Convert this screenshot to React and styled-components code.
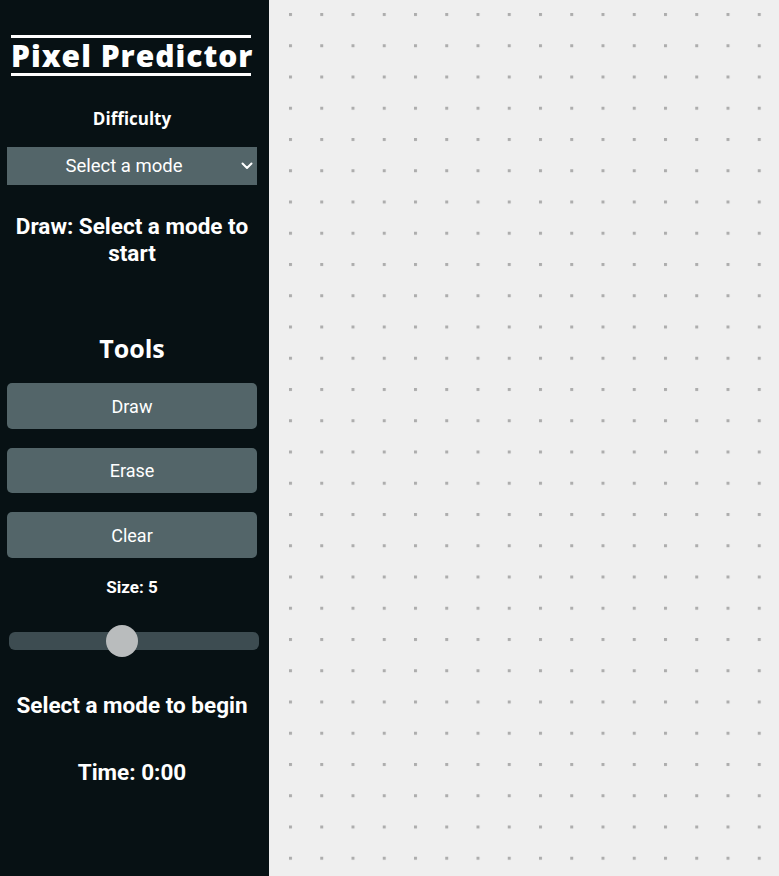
import React, { useState } from 'react';
import styled, { createGlobalStyle } from 'styled-components';

const GlobalStyle = createGlobalStyle`
  html, body {
    margin: 0;
    padding: 0;
    background: #efefef;
  }
  body {
    font-family: Roboto, "Liberation Sans", sans-serif;
  }
`;

const Layout = styled.div`
  display: flex;
  height: 100vh;
  width: 100%;
`;

const Sidebar = styled.aside`
  box-sizing: border-box;
  width: 269px;
  flex-shrink: 0;
  background-color: #071114;
  color: #ffffff;
  padding: 35px 12px 0 7px;
  display: flex;
  flex-direction: column;
  align-items: center;
  text-align: center;
`;

const Title = styled.h1`
  margin: 0 0 0 -2px;
  width: 240px;
  border-top: 3px solid #ffffff;
  border-bottom: 3px solid #ffffff;
  font-family: "Open Sans", sans-serif;
  font-weight: 800;
  font-size: 30px;
  letter-spacing: 1px;
  line-height: 35px;
  white-space: nowrap;
`;

const Heading = styled.h2`
  margin: ${(p) => p.$margin};
  font-family: "Open Sans", sans-serif;
  font-weight: 700;
  font-size: ${(p) => p.$size}px;
  line-height: 1.2;
`;

const Status = styled.p`
  margin: ${(p) => p.$margin};
  font-family: Roboto, sans-serif;
  font-weight: 700;
  font-size: ${(p) => p.$size || 22.5}px;
  line-height: 27px;
`;

const SelectWrap = styled.label`
  position: relative;
  display: block;
  width: 100%;
  margin-top: 18px;
`;

const ModeSelect = styled.select`
  appearance: none;
  -webkit-appearance: none;
  display: block;
  width: 100%;
  height: 38px;
  padding: 0 16px 0 0;
  border: none;
  border-radius: 0;
  background-color: #536569;
  color: #ffffff;
  font-family: Roboto, sans-serif;
  font-size: 18.5px;
  text-align: center;
  text-align-last: center;
  outline: none;
`;

const Chevron = styled.svg`
  position: absolute;
  right: 4px;
  top: 15px;
  width: 12px;
  height: 8px;
  pointer-events: none;
`;

const ToolList = styled.div`
  width: 100%;
  margin-top: 20px;
`;

const ToolButton = styled.button`
  display: block;
  width: 100%;
  height: 45.5px;
  margin-bottom: ${(p) => (p.$last ? 0 : 19)}px;
  border: none;
  border-radius: 5px;
  background-color: #536569;
  color: #ffffff;
  font-family: Roboto, sans-serif;
  font-size: 18px;
  cursor: pointer;
`;

const SliderRow = styled.div`
  display: flex;
  width: 100%;
  margin-top: 31px;
`;

const SizeSlider = styled.input`
  appearance: none;
  -webkit-appearance: none;
  flex-shrink: 0;
  width: 250px;
  height: 18px;
  margin: 0 0 0 2px;
  border-radius: 6px;
  background: #3d4c51;
  outline: none;

  &::-webkit-slider-thumb {
    -webkit-appearance: none;
    appearance: none;
    width: 32px;
    height: 32px;
    border-radius: 50%;
    background: #b9bcbd;
    border: none;
  }
`;

const Board = styled.main`
  flex: 1;
  height: 100%;
  background-color: #efefef;
`;

const DotGrid = styled.svg`
  display: block;
  width: 100%;
  height: 100%;
`;

export default function App() {
  const [size, setSize] = useState(5);

  return (
    <>
      <GlobalStyle />
      <Layout>
        <Sidebar>
          <Title>Pixel Predictor</Title>
          <Heading $size={17} $margin="33px 0 0">Difficulty</Heading>
          <SelectWrap>
            <ModeSelect defaultValue="">
              <option value="">Select a mode</option>
              <option value="easy">Easy</option>
              <option value="medium">Medium</option>
              <option value="hard">Hard</option>
            </ModeSelect>
            <Chevron viewBox="0 0 12 8">
              <path d="M1.5 1.5 L6 6 L10.5 1.5" fill="none" stroke="#ffffff" strokeWidth="2" strokeLinecap="round" strokeLinejoin="round" />
            </Chevron>
          </SelectWrap>
          <Status $margin="28px 0 0">Draw: Select a mode to start</Status>
          <Heading $size={25} $margin="66px 0 0">Tools</Heading>
          <ToolList>
            <ToolButton>Draw</ToolButton>
            <ToolButton>Erase</ToolButton>
            <ToolButton $last>Clear</ToolButton>
          </ToolList>
          <Status $size={17} $margin="16px 0 0">Size: {size}</Status>
          <SliderRow>
            <SizeSlider
              type="range"
              min={1}
              max={10}
              value={size}
              onChange={(e) => setSize(Number(e.target.value))}
            />
          </SliderRow>
          <Status $margin="42px 0 0">Select a mode to begin</Status>
          <Status $margin="40px 0 0">Time: 0:00</Status>
        </Sidebar>
        <Board>
          <DotGrid>
            <defs>
              <pattern
                id="dots"
                x="20"
                y="13"
                width="31.25"
                height="31.25"
                patternUnits="userSpaceOnUse"
              >
                <rect x="0" y="0" width="3" height="3" fill="#adadad" />
              </pattern>
            </defs>
            <rect width="100%" height="100%" fill="url(#dots)" />
          </DotGrid>
        </Board>
      </Layout>
    </>
  );
}
